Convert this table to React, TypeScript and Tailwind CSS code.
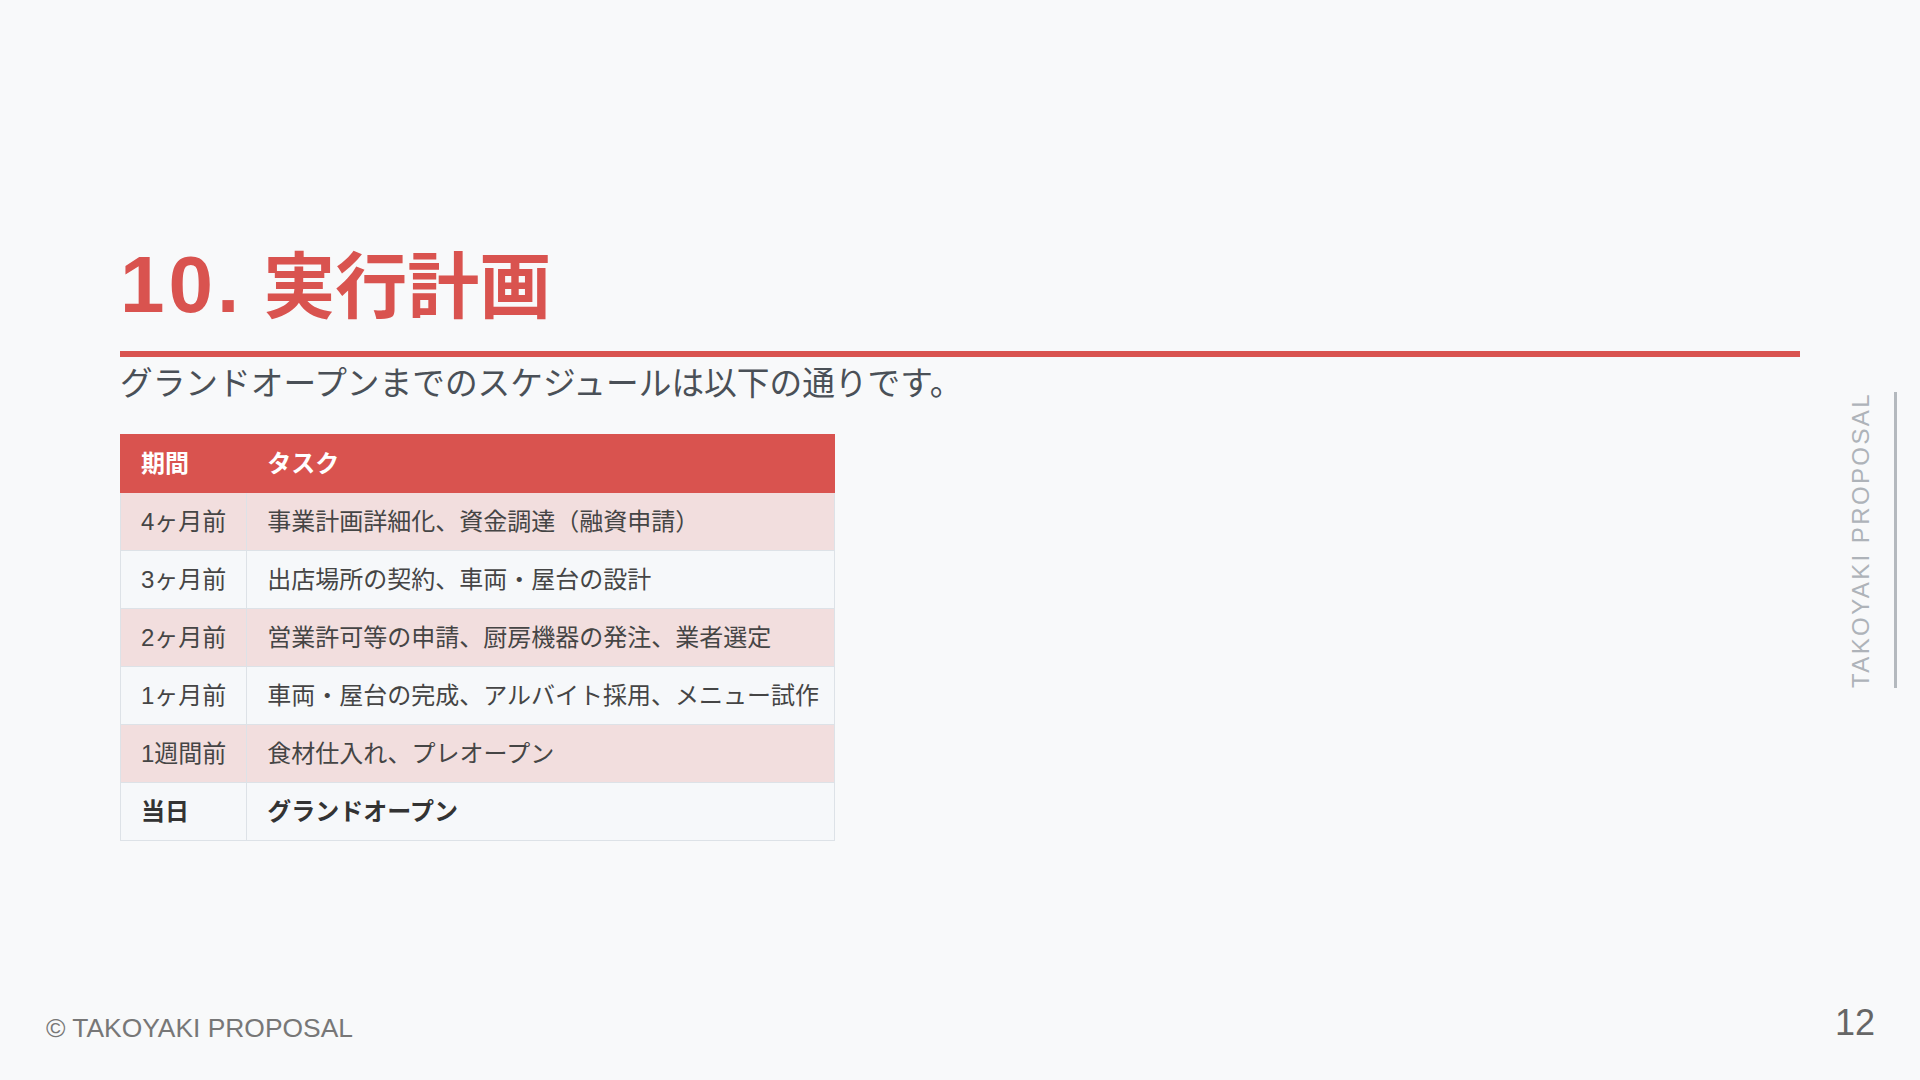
import React from "react";

const rows: { period: string; task: string; pink: boolean; bold?: boolean }[] = [
  { period: "4ヶ月前", task: "事業計画詳細化、資金調達（融資申請）", pink: true },
  { period: "3ヶ月前", task: "出店場所の契約、車両・屋台の設計", pink: false },
  { period: "2ヶ月前", task: "営業許可等の申請、厨房機器の発注、業者選定", pink: true },
  { period: "1ヶ月前", task: "車両・屋台の完成、アルバイト採用、メニュー試作", pink: false },
  { period: "1週間前", task: "食材仕入れ、プレオープン", pink: true },
  { period: "当日", task: "グランドオープン", pink: false, bold: true },
];

export default function App() {
  return (
    <div
      className="relative w-[1920px] h-[1080px] overflow-hidden bg-[#f8f9fa]"
      style={{ fontFamily: '"Liberation Sans", "Noto Sans CJK JP", sans-serif' }}
    >
      <div className="flex h-full flex-col px-[120px] pt-[240px]">
        <h1 className="border-b-[6px] border-[#d9534f] pt-[2px] pb-[18px] text-[72px] font-bold leading-[91px] text-[#d9534f]">
          <span className="text-[80px] leading-none tracking-[4px]">10.</span> 実行計画
        </h1>
        <p className="pt-[3px] text-[32.7px] leading-[48px] text-[#4a5057]">
          グランドオープンまでのスケジュールは以下の通りです。
        </p>
        <table className="mt-[26px] self-start border-collapse text-[24px] leading-[37px]">
          <thead>
            <tr className="bg-[#d9534f] text-white">
              <th className="border border-[#d9534f] px-[20px] py-[10px] text-left font-bold">期間</th>
              <th className="border border-[#d9534f] border-l-[#e8a4a2] pl-[20px] pr-[15px] py-[10px] text-left font-bold">タスク</th>
            </tr>
          </thead>
          <tbody>
            {rows.map((r) => (
              <tr key={r.period} className={r.pink ? "bg-[#f2dede]" : "bg-[#f6f8fa]"}>
                <td
                  className={`border border-[#dde2e7] px-[20px] py-[10px] whitespace-nowrap ${
                    r.bold ? "font-bold text-[#333333]" : "text-[#454545]"
                  }`}
                >
                  {r.period}
                </td>
                <td
                  className={`border border-[#dde2e7] pl-[20px] pr-[15px] py-[10px] whitespace-nowrap ${
                    r.bold ? "font-bold text-[#333333]" : "text-[#454545]"
                  }`}
                >
                  {r.task}
                </td>
              </tr>
            ))}
          </tbody>
        </table>
      </div>

      <div className="absolute right-[23px] top-1/2 flex -translate-y-1/2 items-stretch gap-[15px]">
        <span className="rotate-180 text-[24px] leading-[36px] tracking-[0.1em] text-[#aeb3b9] [writing-mode:vertical-rl]">
          TAKOYAKI PROPOSAL
        </span>
        <div className="w-[3px] bg-[#b4b9be]" />
      </div>

      <div className="absolute bottom-[39px] left-[46px] text-[26.4px] leading-none text-[#777777]">
        © TAKOYAKI PROPOSAL
      </div>
      <div className="absolute bottom-[39px] right-[45px] text-[36px] leading-none text-[#666666]">
        12
      </div>
    </div>
  );
}
